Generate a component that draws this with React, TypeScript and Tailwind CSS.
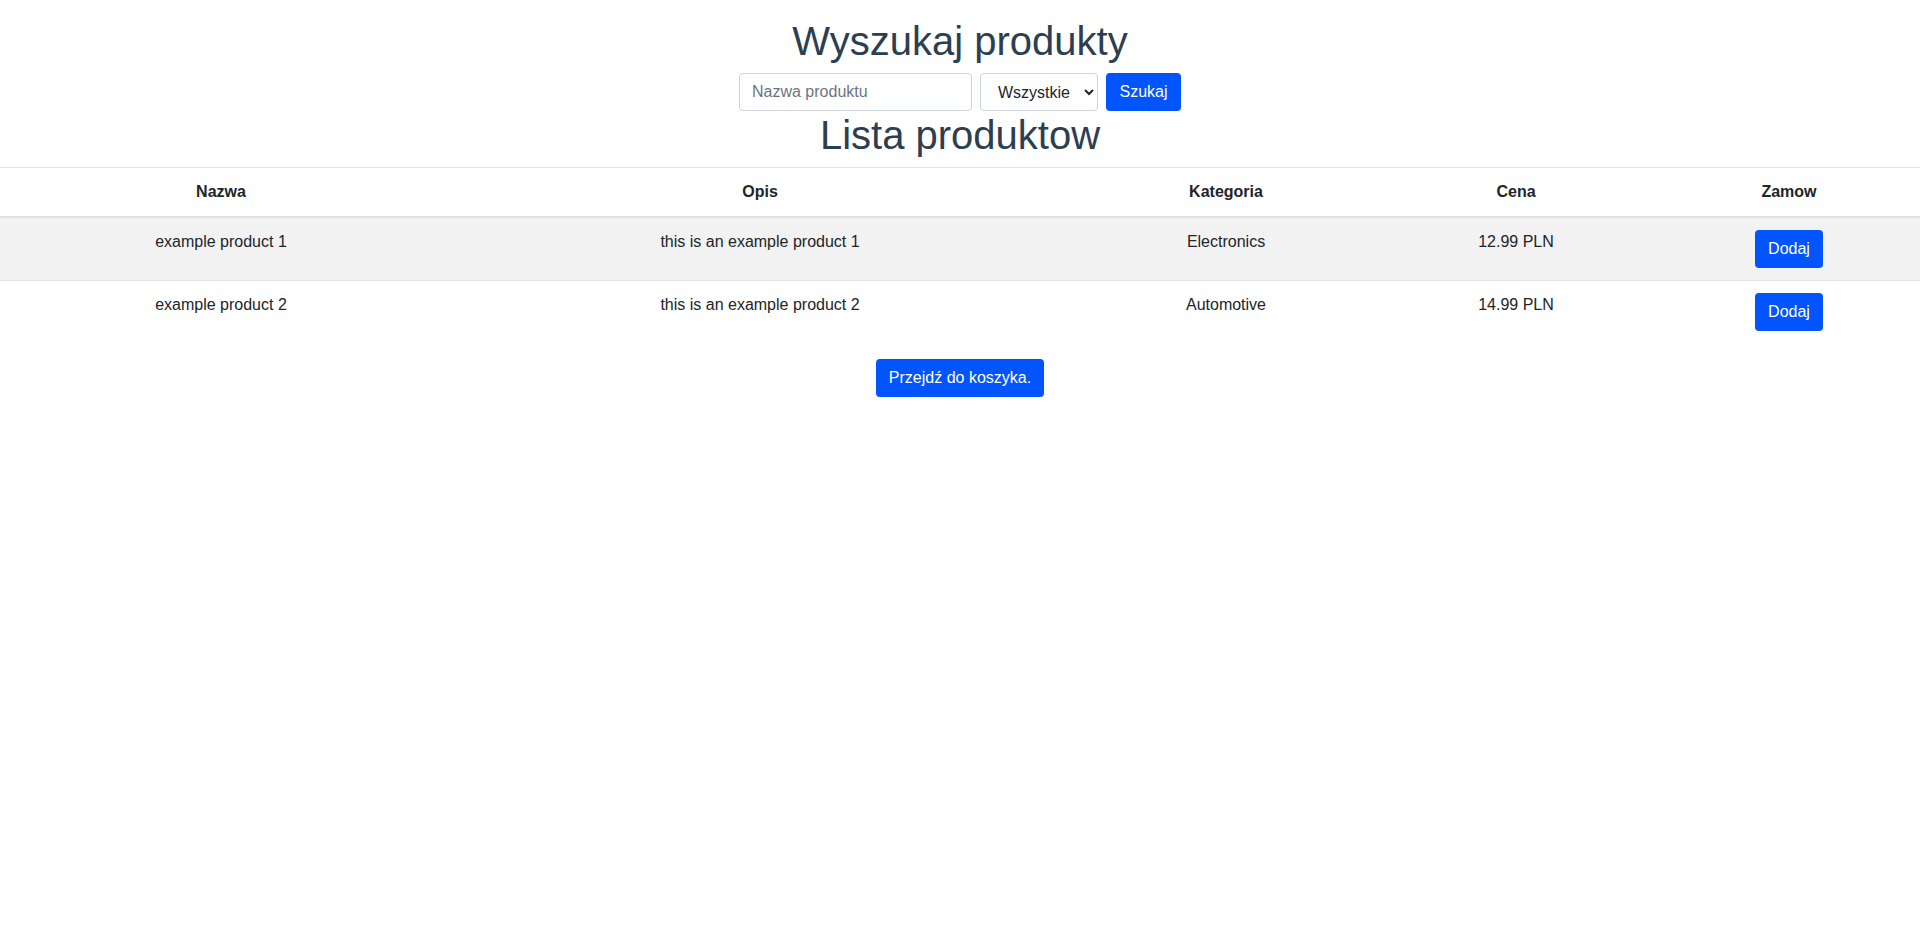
import React from "react";

const products = [
  { name: "example product 1", desc: "this is an example product 1", cat: "Electronics", price: "12.99 PLN" },
  { name: "example product 2", desc: "this is an example product 2", cat: "Automotive", price: "14.99 PLN" },
];

const th = "py-3 px-2 font-bold align-top border-t border-b-2 border-[#dee2e6]";

export default function App() {
  return (
    <div className="min-h-[935px] bg-white text-center text-[#2c3e50] text-[16px] leading-6 font-['Liberation_Sans',Arial,sans-serif] pt-[17px]">
      <h1 className="text-[40px] leading-[48px] font-normal mb-2">Wyszukaj produkty</h1>
      <form className="flex justify-center gap-2" onSubmit={(e) => e.preventDefault()}>
        <input
          type="text"
          placeholder="Nazwa produktu"
          className="w-[233px] h-[38px] px-3 border border-[#ced4da] rounded-[4px] text-[#212529] placeholder:text-[#6c757d] outline-none"
        />
        <select className="w-[118px] h-[38px] pl-[13px] pr-1 border border-[#ced4da] rounded-[4px] text-[#212529] bg-white outline-none">
          <option>Wszystkie</option>
          <option>Electronics</option>
          <option>Automotive</option>
        </select>
        <button type="submit" className="w-[75px] h-[38px] rounded-[4px] bg-[#0255fd] text-white">
          Szukaj
        </button>
      </form>
      <h1 className="text-[40px] leading-[48px] font-normal mb-2">Lista produktow</h1>
      <table className="w-full border-separate border-spacing-0 text-[#212529] table-fixed">
        <colgroup>
          <col className="w-[442px]" />
          <col className="w-[636px]" />
          <col className="w-[296px]" />
          <col className="w-[284px]" />
          <col className="w-[262px]" />
        </colgroup>
        <thead>
          <tr>
            <th className={th}>Nazwa</th>
            <th className={th}>Opis</th>
            <th className={th}>Kategoria</th>
            <th className={th}>Cena</th>
            <th className={th}>Zamow</th>
          </tr>
        </thead>
        <tbody>
          {products.map((p, i) => {
            const td =
              i === 0
                ? "py-3 px-2 align-top bg-[#f2f2f2] border-b border-[#dee2e6]"
                : "py-3 px-2 align-top bg-white";
            return (
              <tr key={p.name}>
                <td className={td}>{p.name}</td>
                <td className={td}>{p.desc}</td>
                <td className={td}>{p.cat}</td>
                <td className={td}>{p.price}</td>
                <td className={td}>
                  <button className="w-[68px] h-[38px] rounded-[4px] bg-[#0255fd] text-white">Dodaj</button>
                </td>
              </tr>
            );
          })}
        </tbody>
      </table>
      <div className="mt-4 flex justify-center">
        <button className="w-[168px] h-[38px] rounded-[4px] bg-[#0255fd] text-white">Przejdź do koszyka.</button>
      </div>
    </div>
  );
}
